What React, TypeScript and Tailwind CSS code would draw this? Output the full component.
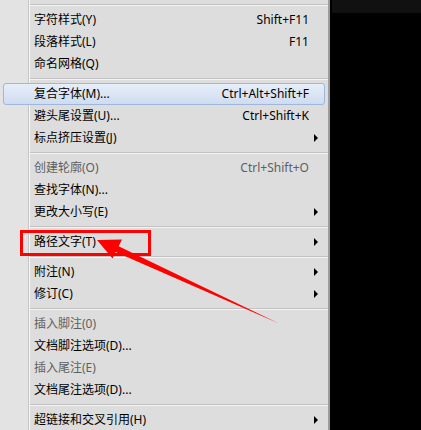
import React from "react";

type Item =
  | { sep: true }
  | { sep?: false; label: string; shortcut?: string; sub?: boolean; disabled?: boolean; hl?: boolean };

const items: Item[] = [
  { sep: true },
  { label: "字符样式(Y)", shortcut: "Shift+F11" },
  { label: "段落样式(L)", shortcut: "F11" },
  { label: "命名网格(Q)" },
  { sep: true },
  { label: "复合字体(M)...", shortcut: "Ctrl+Alt+Shift+F", hl: true },
  { label: "避头尾设置(U)...", shortcut: "Ctrl+Shift+K" },
  { label: "标点挤压设置(J)", sub: true },
  { sep: true },
  { label: "创建轮廓(O)", shortcut: "Ctrl+Shift+O", disabled: true },
  { label: "查找字体(N)..." },
  { label: "更改大小写(E)", sub: true },
  { sep: true },
  { label: "路径文字(T)", sub: true },
  { sep: true },
  { label: "附注(N)", sub: true },
  { label: "修订(C)", sub: true },
  { sep: true },
  { label: "插入脚注(0)", disabled: true },
  { label: "文档脚注选项(D)..." },
  { label: "插入尾注(E)", disabled: true },
  { label: "文档尾注选项(D)..." },
  { sep: true },
  { label: "超链接和交叉引用(H)", sub: true },
];

function SubArrow() {
  return (
    <svg width="5" height="8" viewBox="0 0 5 8" className="block">
      <path d="M0 0 L4 4 L0 8 Z" fill="#000" />
    </svg>
  );
}

export default function App() {
  return (
    <div
      className="relative flex w-[421px] h-[430px] overflow-hidden bg-black text-[12px] leading-none"
      style={{ fontFamily: '"Noto Sans", "Noto Sans CJK SC", sans-serif' }}
    >
      <div className="w-[330px] h-full border-r-2 border-[#9c9c9c] pt-[1px] bg-[linear-gradient(to_right,#e3e3e3_28px,#c6c6c6_28px,#c6c6c6_29px,#f7f7f7_29px,#f7f7f7_30px,#dddddd_30px)]">
        {items.map((it, i) => {
          if (it.sep) {
            return (
              <div key={i} className="h-[8px] pl-[30px] flex flex-col justify-center">
                <div className="h-[1px] bg-[#c2c2c2]" />
                <div className="h-[1px] bg-[#f4f4f4]" />
              </div>
            );
          }
          const color = it.disabled ? "text-[#5f5f5f]" : "text-black";
          if (it.hl) {
            return (
              <div
                key={i}
                className={`h-[22px] mx-[3px] rounded-[3px] border border-[#9db7dd] bg-[linear-gradient(to_bottom,#e6eef9,#cfdcf0)] flex items-center pl-[30px] ${color}`}
              >
                <span className="flex-1">{it.label}</span>
                {it.shortcut && <span>{it.shortcut}</span>}
                <span className="w-[15px] pl-[5px] flex items-center">{it.sub && <SubArrow />}</span>
              </div>
            );
          }
          return (
            <div key={i} className={`h-[22px] flex items-center pl-[34px] ${color}`}>
              <span className="flex-1">{it.label}</span>
              {it.shortcut && <span>{it.shortcut}</span>}
              <span className="w-[19px] pl-[5px] flex items-center">{it.sub && <SubArrow />}</span>
            </div>
          );
        })}
      </div>
      <div className="flex-1 flex flex-col">
        <div className="h-[13px] ml-[2px] bg-[#111111]" />
      </div>
      <svg className="absolute left-0 top-0" width="421" height="430" viewBox="0 0 421 430">
        <rect x="21.5" y="231.5" width="128" height="23" fill="none" stroke="#ff0000" strokeWidth="3" />
        <polygon
          points="97,240 122,239.5 118.6,246.2 279,323.5 115.6,252 112.5,258.5"
          fill="#ff0000"
        />
      </svg>
    </div>
  );
}
